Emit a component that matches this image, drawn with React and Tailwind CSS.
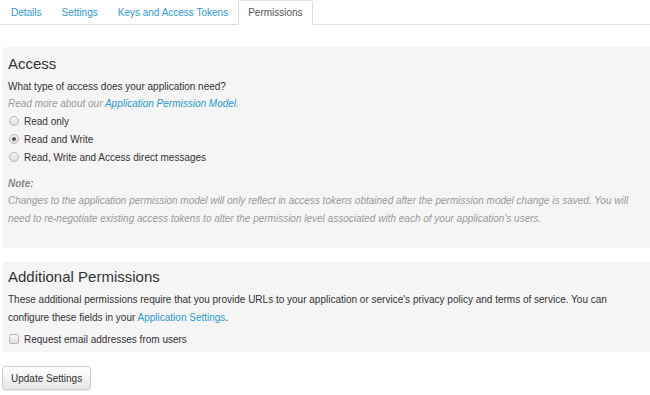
import { useState } from 'react'

const tabs = ['Details', 'Settings', 'Keys and Access Tokens', 'Permissions']

function Radio({ checked }) {
  return (
    <span className="w-[10px] h-[10px] rounded-full border border-[#b8b8b8] bg-gradient-to-b from-[#f6f6f6] to-[#dedede] flex items-center justify-center shrink-0">
      {checked && <span className="w-[4px] h-[4px] rounded-full bg-[#555]" />}
    </span>
  )
}

export default function App() {
  const [access, setAccess] = useState('rw')

  const options = [
    { id: 'r', label: 'Read only' },
    { id: 'rw', label: 'Read and Write' },
    { id: 'rwd', label: 'Read, Write and Access direct messages' },
  ]

  return (
    <div className="w-[650px] h-[395px] bg-white overflow-hidden text-[10px] text-[#333] font-['Liberation_Sans',Arial,sans-serif]">
      {/* Tabs */}
      <div className="flex border-b border-[#ddd] h-[25px] pl-[1px]">
        {tabs.map(t => (
          t === 'Permissions'
            ? <div key={t} className="px-[9px] h-[25px] -mb-px bg-white border border-[#ddd] border-b-white rounded-t-[3px] flex items-center text-[#555]">{t}</div>
            : <div key={t} className="px-[10px] h-[24px] flex items-center text-[#2b9ad6]">{t}</div>
        ))}
      </div>

      {/* Access */}
      <div className="mt-[22px] ml-[2px] bg-[#f5f5f5] rounded-l-[4px] px-[6px] pt-[6px] pb-[20px]">
        <h2 className="text-[15px] leading-[22px] text-[#333]">Access</h2>
        <p className="mt-[3px] leading-[18px]">What type of access does your application need?</p>
        <p className="italic text-[#999] leading-[16px]">
          Read more about our <span className="text-[#2b9ad6]">Application Permission Model</span>.
        </p>
        <div className="flex flex-col">
          {options.map(o => (
            <label key={o.id} onClick={() => setAccess(o.id)} className="flex items-center gap-[5px] h-[18px] pl-[1px] cursor-pointer">
              <Radio checked={access === o.id} />
              <span>{o.label}</span>
            </label>
          ))}
        </div>
        <p className="mt-[10px] italic font-bold text-[#888] leading-[16px]">Note:</p>
        <p className="italic text-[#999] leading-[18px]">
          Changes to the application permission model will only reflect in access tokens obtained after the permission model change is saved. You will need to re-negotiate existing access tokens to alter the permission level associated with each of your application's users.
        </p>
      </div>

      {/* Additional Permissions */}
      <div className="mt-[14px] ml-[2px] bg-[#f5f5f5] rounded-l-[4px] px-[6px] pt-[4px] pb-[4px]">
        <h2 className="text-[15px] leading-[22px] text-[#333]">Additional Permissions</h2>
        <p className="mt-[3px] leading-[18px]">
          These additional permissions require that you provide URLs to your application or service's privacy policy and terms of service. You can configure these fields in your <span className="text-[#2b9ad6]">Application Settings</span>.
        </p>
        <label className="mt-[3px] flex items-center gap-[5px] h-[18px] pl-[1px]">
          <span className="w-[10px] h-[10px] rounded-[2px] border border-[#b8b8b8] bg-gradient-to-b from-[#f6f6f6] to-[#dedede] shrink-0" />
          <span>Request email addresses from users</span>
        </label>
      </div>

      <button className="mt-[14px] ml-[2px] h-[24px] px-[8px] rounded-[3px] border border-[#ccc] bg-gradient-to-b from-white to-[#e6e6e6] text-[10px] text-[#333] shadow-[0_1px_1px_rgba(0,0,0,0.08)]">
        Update Settings
      </button>
    </div>
  )
}
